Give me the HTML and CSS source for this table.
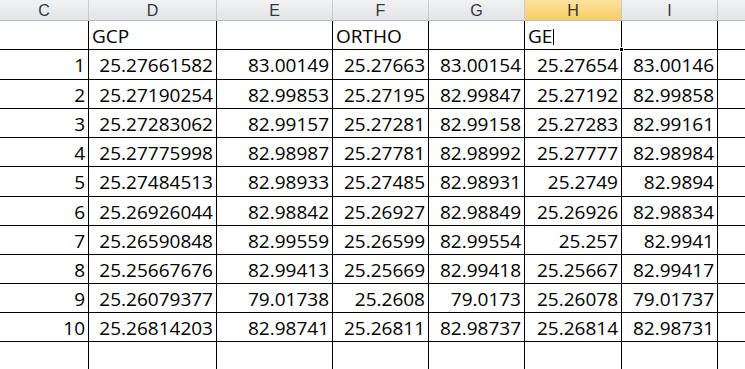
FILE: index.html
```html
<!DOCTYPE html>
<html>
<head>
<meta charset="utf-8">
<link rel="stylesheet" href="styles.css">
</head>
<body>
<div class="sheet">
  <div class="hdr">
    <div class="hc">C</div>
    <div class="hc">D</div>
    <div class="hc">E</div>
    <div class="hc">F</div>
    <div class="hc">G</div>
    <div class="hc sel">H</div>
    <div class="hc">I</div>
    <div class="hc"></div>
  </div>
  <div class="grid">
    <div class="c"></div><div class="c t">GCP</div><div class="c"></div><div class="c t">ORTHO</div><div class="c"></div><div class="c t">GE<span class="caret"></span></div><div class="c"></div><div class="c"></div>

    <div class="c n">1</div><div class="c n">25.27661582</div><div class="c n">83.00149</div><div class="c n">25.27663</div><div class="c n">83.00154</div><div class="c n">25.27654</div><div class="c n">83.00146</div><div class="c"></div>
    <div class="c n">2</div><div class="c n">25.27190254</div><div class="c n">82.99853</div><div class="c n">25.27195</div><div class="c n">82.99847</div><div class="c n">25.27192</div><div class="c n">82.99858</div><div class="c"></div>
    <div class="c n">3</div><div class="c n">25.27283062</div><div class="c n">82.99157</div><div class="c n">25.27281</div><div class="c n">82.99158</div><div class="c n">25.27283</div><div class="c n">82.99161</div><div class="c"></div>
    <div class="c n">4</div><div class="c n">25.27775998</div><div class="c n">82.98987</div><div class="c n">25.27781</div><div class="c n">82.98992</div><div class="c n">25.27777</div><div class="c n">82.98984</div><div class="c"></div>
    <div class="c n">5</div><div class="c n">25.27484513</div><div class="c n">82.98933</div><div class="c n">25.27485</div><div class="c n">82.98931</div><div class="c n">25.2749</div><div class="c n">82.9894</div><div class="c"></div>
    <div class="c n">6</div><div class="c n">25.26926044</div><div class="c n">82.98842</div><div class="c n">25.26927</div><div class="c n">82.98849</div><div class="c n">25.26926</div><div class="c n">82.98834</div><div class="c"></div>
    <div class="c n">7</div><div class="c n">25.26590848</div><div class="c n">82.99559</div><div class="c n">25.26599</div><div class="c n">82.99554</div><div class="c n">25.257</div><div class="c n">82.9941</div><div class="c"></div>
    <div class="c n">8</div><div class="c n">25.25667676</div><div class="c n">82.99413</div><div class="c n">25.25669</div><div class="c n">82.99418</div><div class="c n">25.25667</div><div class="c n">82.99417</div><div class="c"></div>
    <div class="c n">9</div><div class="c n">25.26079377</div><div class="c n">79.01738</div><div class="c n">25.2608</div><div class="c n">79.0173</div><div class="c n">25.26078</div><div class="c n">79.01737</div><div class="c"></div>
    <div class="c n">10</div><div class="c n">25.26814203</div><div class="c n">82.98741</div><div class="c n">25.26811</div><div class="c n">82.98737</div><div class="c n">25.26814</div><div class="c n">82.98731</div><div class="c"></div>

    <div class="c"></div><div class="c"></div><div class="c"></div><div class="c"></div><div class="c"></div><div class="c"></div><div class="c"></div><div class="c"></div>
  </div>
  <div class="handle"></div>
</div>
</body>
</html>
```

FILE: styles.css
```css
* { box-sizing: border-box; }
html, body {
  margin: 0;
  padding: 0;
  background: #fff;
  overflow: hidden;
}
body {
  width: 745px;
  height: 369px;
}
.sheet {
  position: relative;
  width: 745px;
  height: 369px;
  overflow: hidden;
  display: flex;
  flex-direction: column;
  font-family: "Open Sans", "Liberation Sans", sans-serif;
}
.hdr {
  display: grid;
  grid-template-columns: 88px 127px 115px 95px 95px 96px 95px 28px;
  column-gap: 1px;
  background: #c8ccd1;
  border-bottom: 1px solid #b9bec4;
  height: 21px;
  width: 745px;
  flex: none;
}
.hc {
  background: linear-gradient(#f1f2f4, #e2e4e7);
  color: #333840;
  font-family: "Liberation Sans", "Open Sans", sans-serif;
  font-size: 16px;
  line-height: 19px;
  padding-top: 1px;
  text-align: center;
}
.hc.sel {
  background: linear-gradient(#fbe3a0, #f6cd62);
  color: #3a3326;
}
.grid {
  flex: 1;
  display: grid;
  grid-template-columns: 88px 127px 115px 95px 95px 96px 95px 28px;
  grid-template-rows: 28px 29px 28px 28px 28px 29px 28px 28px 28px 28px 28px 1fr;
  gap: 1px;
  background: #000;
  width: 745px;
}
.c {
  background: #fff;
  color: #000;
  font-size: 19px;
  line-height: 20px;
  padding-top: 5px;
  white-space: nowrap;
}
.n {
  text-align: right;
  padding-right: 3px;
}
.t {
  text-align: left;
  padding-left: 3px;
}
.caret {
  display: inline-block;
  width: 1px;
  height: 16px;
  background: #000;
  margin-left: 1px;
  vertical-align: -2px;
}
.handle {
  position: absolute;
  left: 619px;
  top: 47px;
  width: 5px;
  height: 5px;
  background: #000;
  border: 1px solid #fff;
}
```
